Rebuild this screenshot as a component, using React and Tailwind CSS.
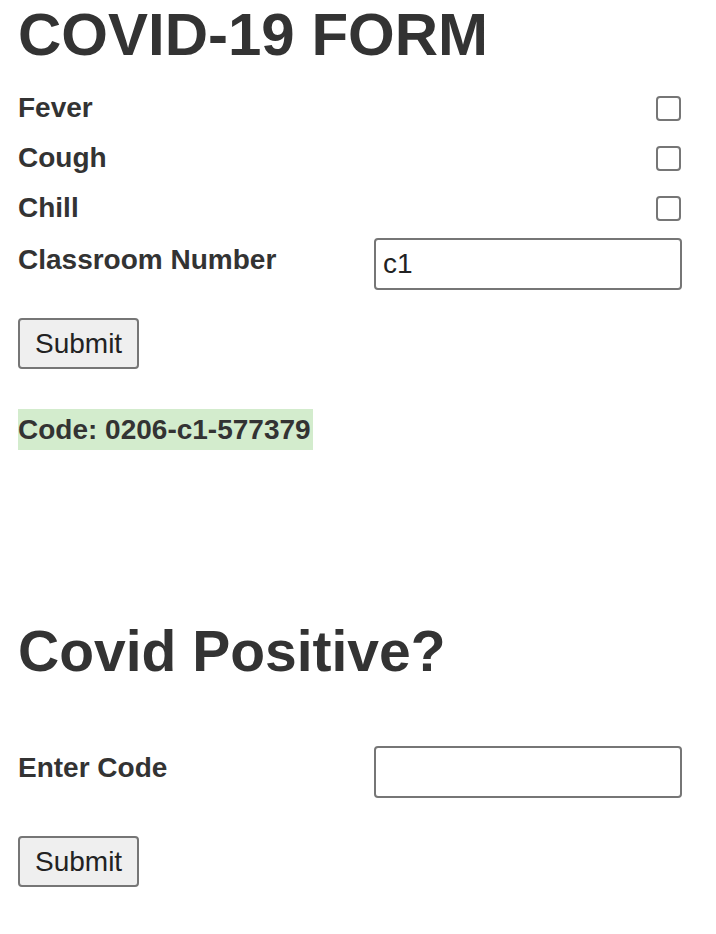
export default function App() {
  const font = "font-['Liberation_Sans',Arial,Helvetica,sans-serif]";
  const checkRows = ["Fever", "Cough", "Chill"];
  return (
    <div className={`bg-white min-h-[934px] pl-[18px] pr-[34px] text-[#333] ${font}`}>
      <h1 className="text-[60px] leading-[69px] font-bold">COVID-19 FORM</h1>
      <div className="mt-[14px]">
        {checkRows.map((l) => (
          <div key={l} className="h-[50px] flex items-center justify-between">
            <span className="text-[28px] leading-[32px] font-bold">{l}</span>
            <input
              type="checkbox"
              className="appearance-none w-[25px] h-[25px] border-2 border-[#767676] rounded-[4px] bg-white mr-[1px]"
            />
          </div>
        ))}
        <div className="mt-[5px] flex items-start">
          <label className="w-[356px] pt-[6px] text-[28px] leading-[32px] font-bold">Classroom Number</label>
          <input
            type="text"
            defaultValue="c1"
            className={`w-[308px] h-[52px] border-2 border-[#767676] rounded-[4px] px-[7px] text-[28px] text-[#222] outline-none ${font}`}
          />
        </div>
      </div>
      <button
        className={`mt-[28px] block h-[51px] px-[15px] bg-[#efefef] border-2 border-[#767676] rounded-[4px] text-[28px] leading-[32px] text-[#222] ${font}`}
      >
        Submit
      </button>
      <div className="mt-[40px]">
        <span className="inline-block h-[41px] leading-[41px] bg-[#d3eccd] text-[28px] font-bold pr-[2px]">
          Code: 0206-c1-577379
        </span>
      </div>
      <h2 className="mt-[168px] text-[57px] leading-[66px] font-bold">Covid Positive?</h2>
      <div className="mt-[62px] flex items-start">
        <label className="w-[356px] pt-[6px] text-[28px] leading-[32px] font-bold">Enter Code</label>
        <input
          type="text"
          className={`w-[308px] h-[52px] border-2 border-[#767676] rounded-[4px] px-[7px] text-[28px] text-[#222] outline-none ${font}`}
        />
      </div>
      <button
        className={`mt-[38px] block h-[51px] px-[15px] bg-[#efefef] border-2 border-[#767676] rounded-[4px] text-[28px] leading-[32px] text-[#222] ${font}`}
      >
        Submit
      </button>
    </div>
  );
}
